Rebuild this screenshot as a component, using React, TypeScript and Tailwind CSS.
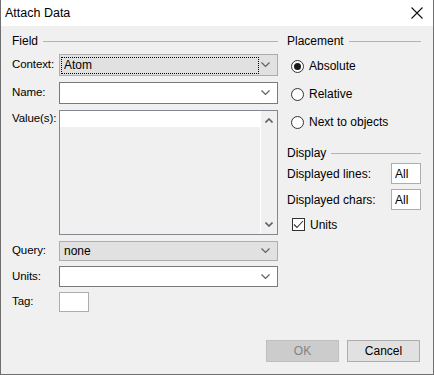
import React from "react";

const Chevron = () => (
  <svg width="9" height="6" viewBox="0 0 9 6" className="shrink-0">
    <path d="M0.5 0.5 L4.5 4.5 L8.5 0.5" fill="none" stroke="#606060" strokeWidth="1.2" />
  </svg>
);

const GroupHeader = ({ title }: { title: string }) => (
  <div className="flex items-center h-[16px] gap-[5px]">
    <span>{title}</span>
    <div className="flex-1 h-px bg-[#b4b4b4]" />
  </div>
);

const Radio = ({ label, checked }: { label: string; checked?: boolean }) => (
  <div className="flex items-center h-[16px] gap-[5px] pl-[4px]">
    <div className="w-[13px] h-[13px] rounded-full border border-[#333333] bg-white flex items-center justify-center">
      {checked && <div className="w-[7px] h-[7px] rounded-full bg-[#1a1a1a]" />}
    </div>
    <span>{label}</span>
  </div>
);

const Label = ({ children, className = "" }: { children: React.ReactNode; className?: string }) => (
  <span className={"w-[47px] shrink-0 text-[11.5px] tracking-[-0.1px] " + className}>{children}</span>
);

export default function App() {
  return (
    <div
      className="w-[434px] h-[375px] flex flex-col border-x border-b border-[#6f6f6f] text-black text-[12px] leading-none"
      style={{ fontFamily: '"Liberation Sans", Arial, sans-serif' }}
    >
      <div className="h-[26px] bg-white flex items-center justify-between pl-[4px] pr-[10px] shrink-0">
        <span className="text-[12.5px]">Attach Data</span>
        <svg width="12" height="12" viewBox="0 0 12 12">
          <path d="M0.5 0.5 L11.5 11.5 M11.5 0.5 L0.5 11.5" stroke="#111" strokeWidth="1.1" fill="none" />
        </svg>
      </div>
      <div className="flex-1 bg-[#f0f0f0] flex flex-col pt-[7px] pl-[11px] pr-[12px] pb-[12px]">
        <div className="flex gap-[9px]">
          {/* Left column */}
          <div className="w-[266px] flex flex-col">
            <GroupHeader title="Field" />
            <div className="flex items-center mt-[5px]">
              <Label>Context:</Label>
              <div className="flex-1 h-[22px] bg-[#e1e1e1] border border-[#adadad] flex items-center pl-[1px] pr-[7px]">
                <div className="w-[198px] h-[17px] border border-dotted border-black flex items-center pl-[2px]">
                  Atom
                </div>
                <div className="flex-1" />
                <Chevron />
              </div>
            </div>
            <div className="flex items-center mt-[6px]">
              <Label>Name:</Label>
              <div className="flex-1 h-[22px] bg-white border border-[#7a7a7a] flex items-center justify-end pr-[7px]">
                <Chevron />
              </div>
            </div>
            <div className="flex items-start mt-[6px]">
              <Label className="mt-[3px]">Value(s):</Label>
              <div className="flex-1 h-[125px] border border-[#828790] flex bg-[#f0f0f0]">
                <div className="flex-1 flex flex-col border-r border-white">
                  <div className="h-[16px] bg-white" />
                </div>
                <div className="w-[16px] flex flex-col items-center justify-between pt-[7px] pb-[7px]">
                  <svg width="8" height="5" viewBox="0 0 8 5">
                    <path d="M0.5 4.5 L4 1 L7.5 4.5" fill="none" stroke="#606060" strokeWidth="1.6" />
                  </svg>
                  <svg width="8" height="5" viewBox="0 0 8 5">
                    <path d="M0.5 0.5 L4 4 L7.5 0.5" fill="none" stroke="#606060" strokeWidth="1.6" />
                  </svg>
                </div>
              </div>
            </div>
            <div className="flex items-center mt-[6px]">
              <Label>Query:</Label>
              <div className="flex-1 h-[20px] bg-[#e1e1e1] border border-[#adadad] flex items-center pl-[4px] pr-[7px]">
                <span className="flex-1">none</span>
                <Chevron />
              </div>
            </div>
            <div className="flex items-center mt-[5px]">
              <Label>Units:</Label>
              <div className="flex-1 h-[21px] bg-white border border-[#7a7a7a] flex items-center justify-end pr-[7px]">
                <Chevron />
              </div>
            </div>
            <div className="flex items-center mt-[5px]">
              <Label>Tag:</Label>
              <div className="w-[30px] h-[20px] bg-white border border-[#adadad]" />
            </div>
          </div>
          {/* Right column */}
          <div className="w-[134px] flex flex-col">
            <GroupHeader title="Placement" />
            <div className="mt-[9px] flex flex-col gap-[12px]">
              <Radio label="Absolute" checked />
              <Radio label="Relative" />
              <Radio label="Next to objects" />
            </div>
            <div className="mt-[15px]">
              <GroupHeader title="Display" />
            </div>
            <div className="flex items-center justify-between mt-[2px]">
              <span>Displayed lines:</span>
              <div className="w-[30px] h-[21px] bg-white border border-[#adadad] flex items-center pl-[3px]">All</div>
            </div>
            <div className="flex items-center justify-between mt-[5px]">
              <span>Displayed chars:</span>
              <div className="w-[30px] h-[21px] bg-white border border-[#adadad] flex items-center pl-[3px]">All</div>
            </div>
            <div className="flex items-center gap-[5px] mt-[8px] pl-[5px]">
              <div className="w-[13px] h-[13px] border border-[#333333] bg-white flex items-center justify-center">
                <svg width="11" height="9" viewBox="0 0 11 9">
                  <path d="M1 4.5 L4 7.5 L10 1" fill="none" stroke="#333" strokeWidth="1.1" />
                </svg>
              </div>
              <span>Units</span>
            </div>
          </div>
        </div>
        <div className="flex-1" />
        <div className="flex justify-end gap-[8px] pr-[1px]">
          <div className="w-[73px] h-[22px] bg-[#cccccc] border border-[#bfbfbf] text-[#838383] flex items-center justify-center">
            OK
          </div>
          <div className="w-[73px] h-[22px] bg-[#e1e1e1] border border-[#adadad] flex items-center justify-center">
            Cancel
          </div>
        </div>
      </div>
    </div>
  );
}
